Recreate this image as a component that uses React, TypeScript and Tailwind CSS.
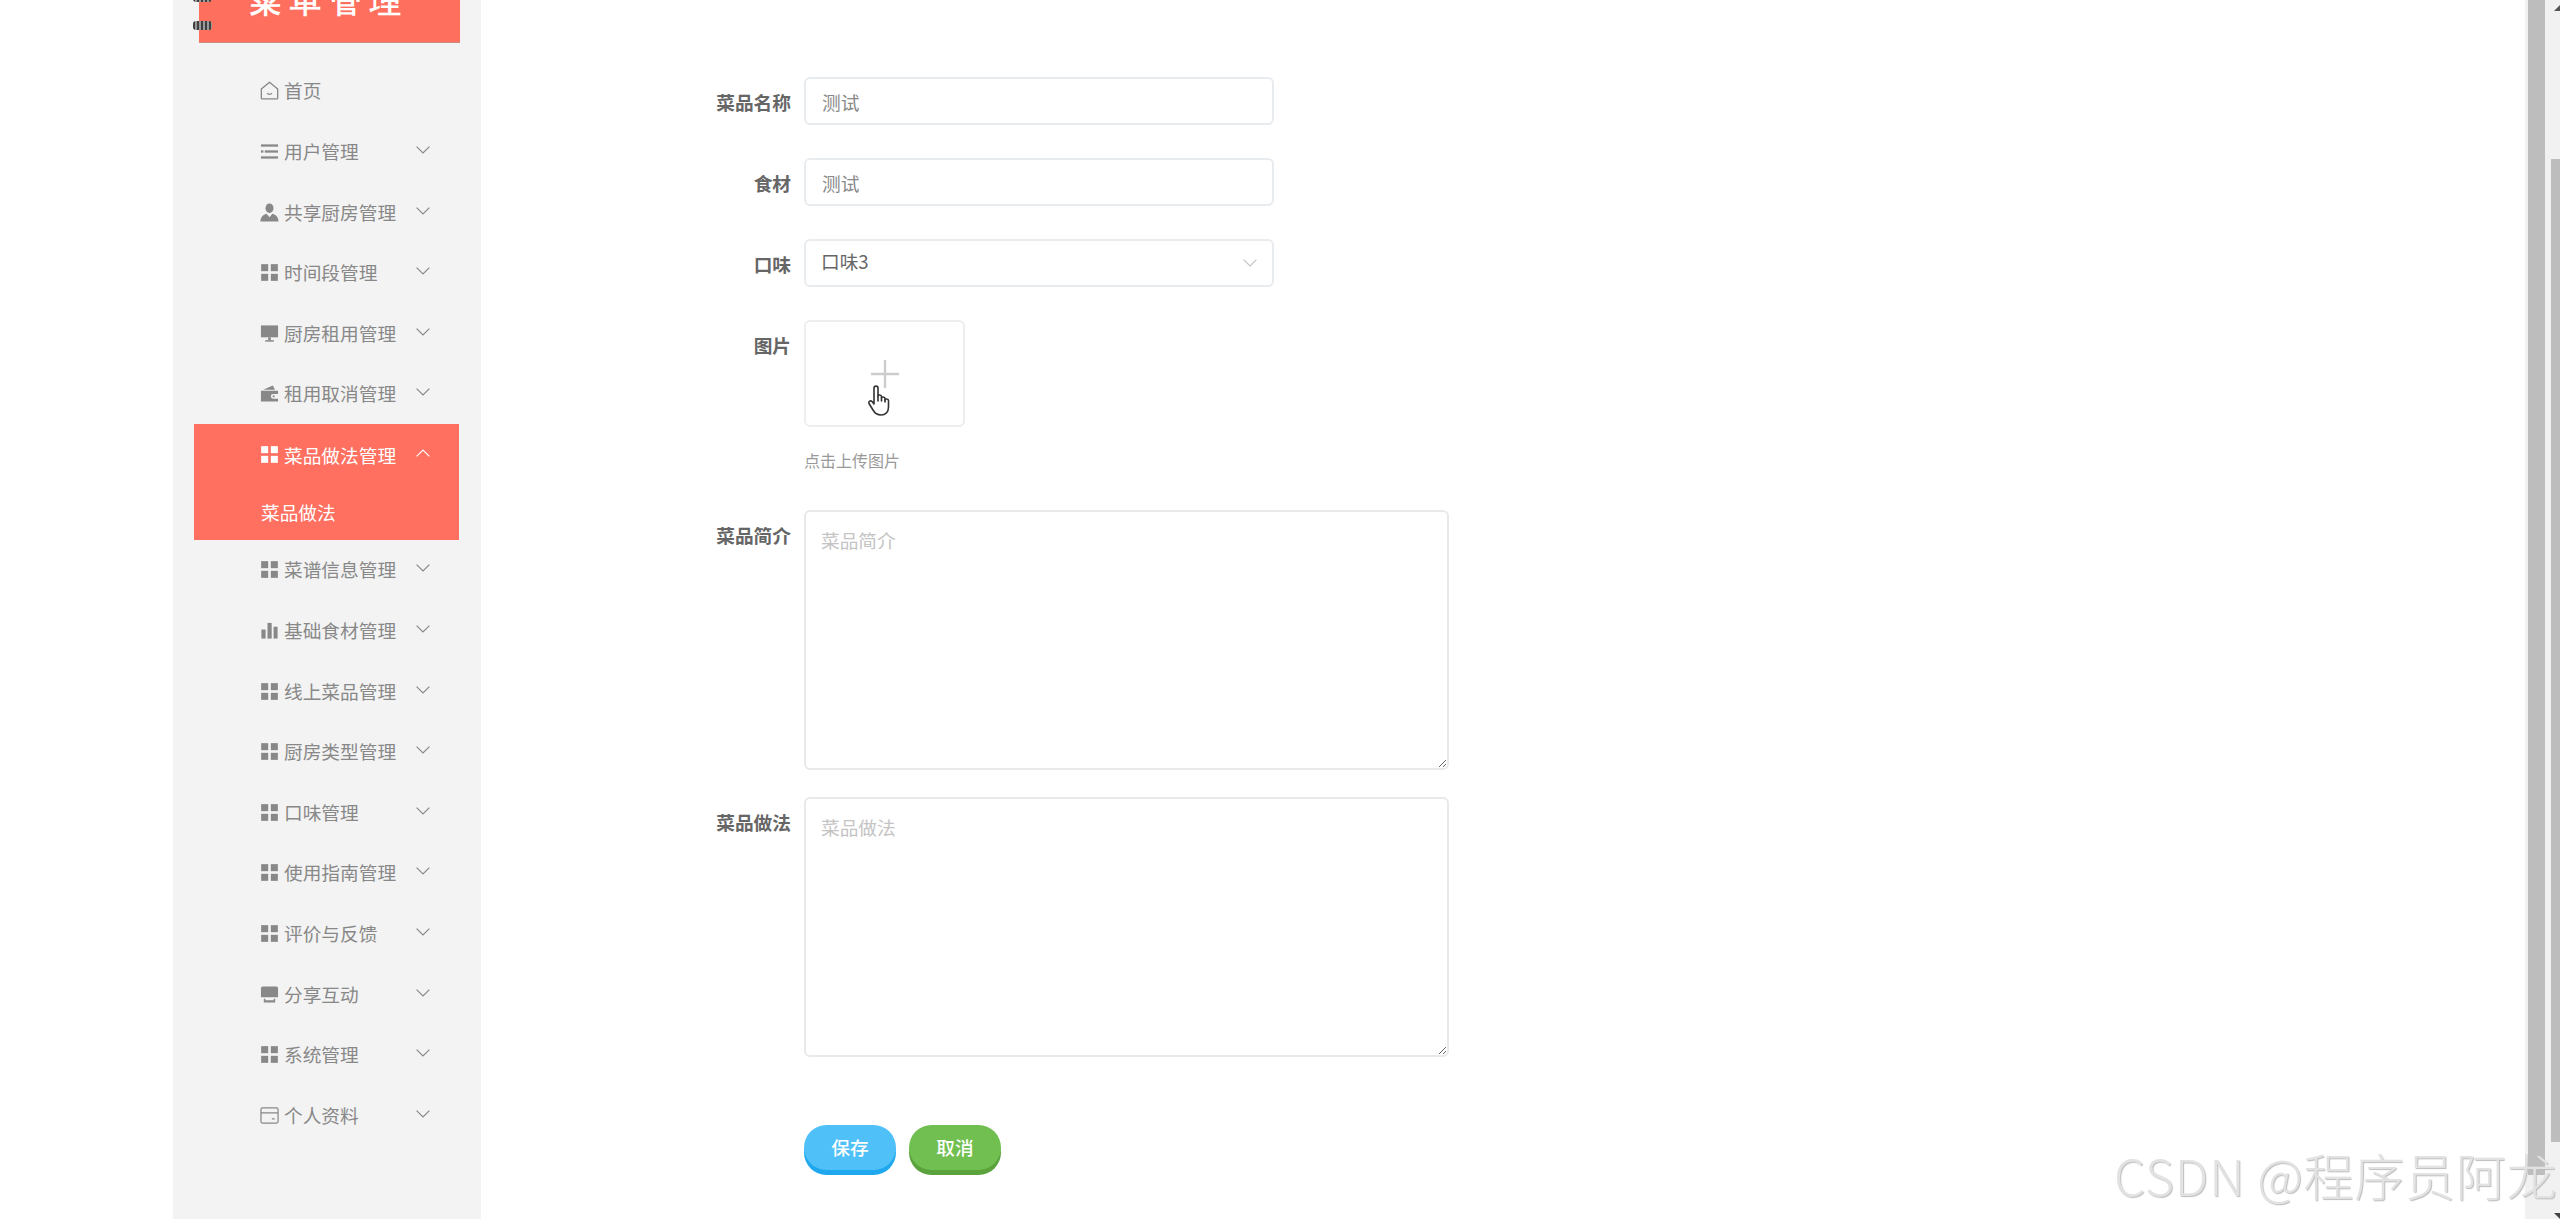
import React from 'react';

type IconProps = { className?: string };

function HomeIcon({ className }: IconProps) {
  return (
    <svg viewBox="0 0 20 20" className={className} fill="none" stroke="currentColor" strokeWidth="1.4">
      <path d="M10 1.2 1.4 8.4V18a.9.9 0 0 0 .9.9h15.4a.9.9 0 0 0 .9-.9V8.4z" strokeLinejoin="round" />
      <path d="M7.8 13.2c.6 1.1 3.8 1.1 4.4 0" strokeLinecap="round" />
    </svg>
  );
}

function OperationIcon({ className }: IconProps) {
  return (
    <svg viewBox="0 0 20 20" className={className} fill="currentColor">
      <rect x="1" y="2.5" width="18" height="2.4" />
      <rect x="5" y="8.8" width="14" height="2.4" />
      <rect x="1" y="8.8" width="2.6" height="2.4" />
      <rect x="1" y="15.1" width="18" height="2.4" />
    </svg>
  );
}

function UserIcon({ className }: IconProps) {
  return (
    <svg viewBox="0 0 20 20" className={className} fill="currentColor">
      <ellipse cx="10" cy="5.4" rx="4.2" ry="5" />
      <path d="M0.5 19.5c0-4.6 2.6-7.4 6.4-8.3L10 15l3.1-3.8c3.8.9 6.4 3.7 6.4 8.3z" />
    </svg>
  );
}

function GridIcon({ className }: IconProps) {
  return (
    <svg viewBox="0 0 20 20" className={className} fill="currentColor">
      <rect x="1.2" y="1.2" width="7.4" height="7.4" />
      <rect x="11.4" y="1.2" width="7.4" height="7.4" />
      <rect x="1.2" y="11.4" width="7.4" height="7.4" />
      <rect x="11.4" y="11.4" width="7.4" height="7.4" />
    </svg>
  );
}

function MonitorIcon({ className }: IconProps) {
  return (
    <svg viewBox="0 0 20 20" className={className} fill="currentColor">
      <rect x="1" y="1.5" width="18" height="12.5" />
      <rect x="8.6" y="14" width="2.8" height="3" />
      <rect x="5.5" y="17" width="9" height="1.6" />
    </svg>
  );
}

function WalletIcon({ className }: IconProps) {
  return (
    <svg viewBox="0 0 20 20" className={className} fill="currentColor">
      <path d="M1 7h18v3.6h-5.2a2.4 2.4 0 0 0 0 4.8H19V18.5H1z" />
      <path d="M3.5 6 13.5 1.5 15.8 6z" />
      <circle cx="14.4" cy="13" r="1.1" />
    </svg>
  );
}

function ChartIcon({ className }: IconProps) {
  return (
    <svg viewBox="0 0 20 20" className={className} fill="currentColor">
      <rect x="1.5" y="9" width="4.4" height="9.5" />
      <rect x="7.9" y="2" width="4.4" height="16.5" />
      <rect x="14.3" y="6" width="4.2" height="12.5" />
    </svg>
  );
}

function ShopIcon({ className }: IconProps) {
  return (
    <svg viewBox="0 0 20 20" className={className} fill="currentColor">
      <path d="M3 1.5h14a2 2 0 0 1 2 2v8.5a1 1 0 0 1-1 1H2a1 1 0 0 1-1-1V3.5a2 2 0 0 1 2-2z" />
      <path d="M4 14.5h1.6v1.6h8.8v-1.6H16v4H4z" />
    </svg>
  );
}

function CardIcon({ className }: IconProps) {
  return (
    <svg viewBox="0 0 20 20" className={className} fill="none" stroke="currentColor" strokeWidth="1.3">
      <rect x="1" y="2" width="18" height="16" rx="1.6" />
      <path d="M1 7.2h18M12.5 13.6h3" />
    </svg>
  );
}

function Chevron({ up, className }: { up?: boolean; className?: string }) {
  return (
    <svg viewBox="0 0 14 8" className={className} fill="none" stroke="currentColor" strokeWidth="1.2">
      <path d={up ? 'M.6 7.4 7 1l6.4 6.4' : 'M.6.6 7 7 13.4.6'} />
    </svg>
  );
}

function Ring({ className }: IconProps) {
  return (
    <div className={`absolute left-[-6px] h-[9px] w-[19px] rounded-[3px] bg-[repeating-linear-gradient(90deg,#3f3f3f_0px,#3f3f3f_2px,#9a9a9a_2px,#9a9a9a_4px)] ${className}`} />
  );
}

const menuTop = [
  { label: '首页', Icon: HomeIcon, noArrow: true },
  { label: '用户管理', Icon: OperationIcon },
  { label: '共享厨房管理', Icon: UserIcon },
  { label: '时间段管理', Icon: GridIcon },
  { label: '厨房租用管理', Icon: MonitorIcon },
  { label: '租用取消管理', Icon: WalletIcon },
];

const menuBottom = [
  { label: '菜谱信息管理', Icon: GridIcon },
  { label: '基础食材管理', Icon: ChartIcon },
  { label: '线上菜品管理', Icon: GridIcon },
  { label: '厨房类型管理', Icon: GridIcon },
  { label: '口味管理', Icon: GridIcon },
  { label: '使用指南管理', Icon: GridIcon },
  { label: '评价与反馈', Icon: GridIcon },
  { label: '分享互动', Icon: ShopIcon },
  { label: '系统管理', Icon: GridIcon },
  { label: '个人资料', Icon: CardIcon },
];

function MenuRow({ label, Icon, noArrow }: { label: string; Icon: (p: IconProps) => React.ReactElement; noArrow?: boolean }) {
  return (
    <div className="flex h-[60.6px] items-center pl-[66px] text-[#888888]">
      <Icon className="mr-[5px] h-[19px] w-[19px] shrink-0" />
      <span className="mt-[-1px] text-[18.7px]">{label}</span>
      {!noArrow && <Chevron className="absolute left-[222px] mt-[-3px] h-[8px] w-[14px]" />}
    </div>
  );
}

function Sidebar() {
  return (
    <aside className="h-full w-[308px] shrink-0 bg-[#f3f3f3]">
      <div className="relative ml-[26px] w-[261px]">
        <Ring className="top-[-7px]" />
        <Ring className="top-[21px]" />
        <div className="h-[43px] overflow-hidden border-b border-[#c98a80] bg-[#ff6f5e]">
          <div className="mt-[-18px] text-center font-serif text-[31px] leading-[40px] font-bold tracking-[9px] text-white">菜单管理</div>
        </div>
      </div>
      <nav className="relative ml-[21px] mt-[17.7px] w-[265px]">
        {menuTop.map((m) => (
          <MenuRow key={m.label} {...m} />
        ))}
        <div className="mt-[-0.6px] bg-[#ff7060] text-white">
          <div className="flex h-[62px] items-center pl-[66px]">
            <GridIcon className="mr-[5px] h-[19px] w-[19px] shrink-0" />
            <span className="text-[18.7px]">菜品做法管理</span>
            <Chevron up className="absolute left-[222px] mt-[-4px] h-[8px] w-[14px]" />
          </div>
          <div className="flex h-[54px] items-center pb-[2px] pl-[67px] text-[18.7px]">菜品做法</div>
        </div>
        {menuBottom.map((m) => (
          <MenuRow key={m.label} {...m} />
        ))}
      </nav>
    </aside>
  );
}

function Label({ children }: { children: React.ReactNode }) {
  return <div className="w-[100px] shrink-0 text-right text-[18.7px] leading-[50px] font-bold text-[#666666]">{children}</div>;
}

function TextInput({ value }: { value: string }) {
  return (
    <input
      readOnly
      value={value}
      className="h-[48px] w-[470px] rounded-md border-2 border-[#e9ecef] bg-white pl-[16px] text-[18.7px] text-[#888888] outline-none"
    />
  );
}

function TextBox({ placeholder }: { placeholder: string }) {
  return (
    <textarea
      placeholder={placeholder}
      className="h-[260px] w-[645px] rounded-md border-2 border-[#e9e9e9] bg-white px-[15px] py-[13px] text-[18.7px] leading-[30px] text-[#888888] outline-none placeholder:text-[#c4c4c4]"
    />
  );
}

function HandCursor({ className }: IconProps) {
  return (
    <svg viewBox="0 0 24 32" className={className} fill="#fff" stroke="#333" strokeWidth="1.6" strokeLinejoin="round" strokeLinecap="round">
      <path d="M7 4C7 1.5 11 1.5 11 4V12C11 10.5 14.5 10.5 14.5 12.5V14C14.5 12.5 18 12.5 18 14.5V16C18 14.5 21.5 14.5 21.5 16.5V23C21.5 28 18.5 31 14 31C10 31 8 29.5 6 26L2 19.5C1 17.5 3.5 16 5 17.5L7 20Z" />
      <path d="M11 12V17M14.5 14V17M18 16V18" fill="none" />
    </svg>
  );
}

function Form() {
  return (
    <main className="min-w-0 flex-1 pt-[77px] pl-[210px]">
      <div className="mb-[31px] flex gap-[13px]">
        <Label>菜品名称</Label>
        <TextInput value="测试" />
      </div>
      <div className="mb-[31px] flex gap-[13px]">
        <Label>食材</Label>
        <TextInput value="测试" />
      </div>
      <div className="mb-[31px] flex gap-[13px]">
        <Label>口味</Label>
        <div className="flex h-[48px] w-[470px] items-center justify-between rounded-md border-2 border-[#e9ecef] bg-white pr-[15px] pl-[15px] text-[18.7px] text-[#666666]">
          <span className="mt-[-3px]">口味3</span>
          <Chevron className="h-[8px] w-[14px] text-[#c4c4c4]" />
        </div>
      </div>
      <div className="mb-[38px] flex gap-[13px]">
        <Label>图片</Label>
        <div>
          <div className="relative flex h-[107px] w-[161px] items-center justify-center rounded-md border-2 border-[#eeeeee] bg-white">
            <svg viewBox="0 0 28 28" className="h-[28px] w-[28px]" stroke="#cccccc" strokeWidth="2.4">
              <path d="M14 0V28M0 14H28" />
            </svg>
            <HandCursor className="absolute top-[62px] left-[61px] h-[32px] w-[24px]" />
          </div>
          <div className="mt-[21px] text-[16px] leading-[24px] text-[#999999]">点击上传图片</div>
        </div>
      </div>
      <div className="mb-[27px] flex gap-[13px]">
        <Label>菜品简介</Label>
        <TextBox placeholder="菜品简介" />
      </div>
      <div className="mb-[68px] flex gap-[13px]">
        <Label>菜品做法</Label>
        <TextBox placeholder="菜品做法" />
      </div>
      <div className="flex gap-[13px] pl-[113px]">
        <button className="h-[45px] w-[92px] rounded-full bg-[#4fc0f8] text-[18.7px] font-medium text-white shadow-[0_5px_0_#1fa8ee]">保存</button>
        <button className="h-[45px] w-[92px] rounded-full bg-[#71bf51] text-[18.7px] font-medium text-white shadow-[0_5px_0_#5aa23c]">取消</button>
      </div>
    </main>
  );
}

function ScrollStrip() {
  return (
    <div className="relative flex h-full w-[35px] shrink-0 bg-[#f1f1f1] pl-[3px]">
      <div className="h-[1175px] w-[17px] bg-[#bdbdbd]" />
      <div className="ml-[6px] w-[9px]">
        <div className="mt-[159px] h-[983px] w-[9px] bg-[#bdbdbd]" />
      </div>
      <svg viewBox="0 0 6 6" className="absolute top-[5px] right-0 h-[6px] w-[6px]" fill="#555555">
        <path d="M0 6 6 0V6z" />
      </svg>
      <svg viewBox="0 0 6 6" className="absolute right-0 bottom-0 h-[6px] w-[6px]" fill="#444444">
        <path d="M0 0H6V6z" />
      </svg>
    </div>
  );
}

export default function App() {
  return (
    <div className="relative flex h-[1219px] w-[2560px] overflow-hidden bg-white pl-[173px] font-['Noto_Sans_CJK_SC',sans-serif]">
      <Sidebar />
      <Form />
      <ScrollStrip />
      <div className="absolute top-[1142px] left-[2114px] text-[50px] leading-[64px] font-light tracking-[0.8px] whitespace-nowrap text-[#e2e2e2] [text-shadow:1px_1px_1px_#bdbdbd]">
        CSDN @程序员阿龙
      </div>
    </div>
  );
}
